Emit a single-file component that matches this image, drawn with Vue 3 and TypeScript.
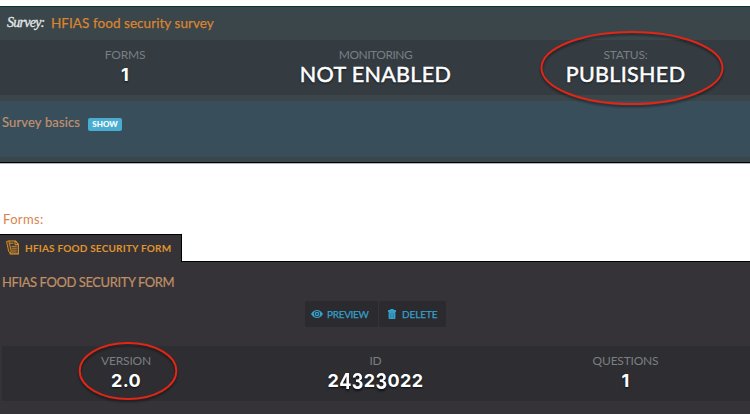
<script setup lang="ts">
interface Stat {
  label: string
  value: string
  kind: string
}

const surveyStats: Stat[] = [
  { label: 'FORMS', value: '1', kind: 'number' },
  { label: 'MONITORING', value: 'NOT ENABLED', kind: 'word' },
  { label: 'STATUS:', value: 'PUBLISHED', kind: 'word' },
]

const formStats: Stat[] = [
  { label: 'VERSION', value: '2.0', kind: 'number' },
  { label: 'ID', value: '24323022', kind: 'number' },
  { label: 'QUESTIONS', value: '1', kind: 'number' },
]

// Old-style figures: 3 and 4 hang below the baseline.
const hangs = (c: string): boolean => c === '3' || c === '4'
</script>

<template>
  <main class="page">
    <section class="survey">
      <header class="survey-head">
        <span class="script">Survey:</span>
        <h1 class="title">HFIAS food security survey</h1>
      </header>
      <div class="stats">
        <div v-for="s in surveyStats" :key="s.label" class="stat">
          <span class="label" :class="{ tight: s.label === 'MONITORING' }">{{ s.label }}</span>
          <span class="value" :class="s.kind">{{ s.value }}</span>
        </div>
        <svg class="ring ring-status" viewBox="0 0 184 76"><ellipse cx="92" cy="38" rx="90.5" ry="36" /></svg>
      </div>
      <div class="basics">
        <span class="basics-title">Survey basics</span>
        <button class="show">SHOW</button>
      </div>
    </section>

    <h2 class="forms-title">Forms:</h2>

    <div class="tab">
      <svg class="doc" viewBox="0 0 14 15">
        <path d="M2.8 1H9.5L12.3 4.2V13.8H3.6" fill="none" stroke="currentColor" stroke-width="1.2" />
        <path d="M9 1V4.6H12.3" fill="none" stroke="currentColor" />
        <path d="M5.4 6.3H10.8M5.6 8.2H10.8M5.8 10.1H10.8M5.5 12H10.8" stroke="currentColor" stroke-width=".9" />
        <path d="M.6 1.6L2.8.8L5.2 10.8L4.5 13.4L2.7 11.6Z" fill="#5b3d19" stroke="currentColor" stroke-width=".9" />
        <path d="M4 3.2H7.5" stroke="currentColor" />
      </svg>
      <span class="tab-text">HFIAS FOOD SECURITY FORM</span>
    </div>
    <section class="form">
      <h3 class="form-title">HFIAS FOOD SECURITY FORM</h3>
      <div class="actions">
        <button class="action preview">
          <svg class="eye" viewBox="0 0 12 8">
            <path fill="currentColor" fill-rule="evenodd" d="M0 4C1.6 1.4 3.6 0 6 0S10.4 1.4 12 4C10.4 6.6 8.4 8 6 8S1.6 6.6 0 4ZM6 1A3 3 0 1 0 6 7A3 3 0 1 0 6 1ZM6 1.7A2.3 2.3 0 1 1 6 6.3A2.3 2.3 0 1 1 6 1.7ZM6 3.1A.9.9 0 1 0 6 4.9A.9.9 0 1 0 6 3.1Z" />
          </svg>
          <span class="preview-text">PREVIEW</span>
        </button>
        <button class="action delete">
          <svg class="trash" viewBox="0 0 8 10">
            <path fill="currentColor" d="M2.3 1V0H5.7V1H8V3H0V1ZM.6 3H7.4V9.2Q7.4 10 6.6 10H1.4Q.6 10 .6 9.2Z" />
            <path stroke="#2a7193" stroke-width=".5" d="M2.5 4V9M4 4V9M5.5 4V9" />
          </svg>
          <span class="delete-text">DELETE</span>
        </button>
      </div>
      <div class="stats form-stats">
        <div v-for="s in formStats" :key="s.label" class="stat">
          <span class="label">{{ s.label }}</span>
          <span class="value" :class="s.kind"><span v-for="(c, i) in s.value" :key="i" :class="{ hang: hangs(c) }">{{ c }}</span></span>
        </div>
        <svg class="ring ring-version" viewBox="0 0 100 60"><ellipse cx="50" cy="30" rx="48.3" ry="28" /></svg>
      </div>
    </section>
  </main>
</template>

<style>
body {
  margin: 0;
  background: #fff;
}
</style>

<style scoped>
.page {
  box-sizing: border-box;
  width: 750px;
  height: 414px;
  padding-top: 6px;
  overflow: hidden;
  font-family: Lato, "Open Sans", sans-serif;
  background: #fff;
}
h1, h2, h3 {
  margin: 0;
  font-weight: 400;
}
button {
  border: 0;
  font-family: inherit;
}
span {
  white-space: nowrap;
}
.survey {
  box-sizing: border-box;
  height: 157px;
  border-top: 1px solid #08343a;
  border-bottom: 1px solid #000;
  background: #3b464b;
  box-shadow: 0 1px 0 #b5b5b5;
}
.survey-head {
  display: flex;
  height: 33px;
  padding-left: 7px;
}
.script {
  width: 44px;
  padding-top: 7px;
  box-sizing: border-box;
  color: #e4e9ea;
  font: italic 400 14px/18px "Liberation Serif", serif;
  letter-spacing: -0.75px;
  -webkit-text-stroke: 0.3px #e4e9ea;
}
.title {
  padding-top: 7px;
  color: #d9842f;
  font-size: 13.5px;
  line-height: 18px;
  letter-spacing: 0.05px;
  -webkit-text-stroke: 0.25px #d9842f;
}
.stats {
  position: relative;
  display: grid;
  grid-template-columns: 250px 251px 249px;
  height: 55px;
  background: #343b41;
}
.stat {
  display: flex;
  flex-direction: column;
  align-items: center;
  padding-top: 7px;
}
.label {
  color: #7b7f82;
  font-size: 12px;
  line-height: 15px;
  letter-spacing: -0.2px;
}
.tight {
  letter-spacing: -0.5px;
}
.value {
  color: #fff;
  text-shadow: 0 1px 2px #0a1015;
}
.word {
  font-size: 21.5px;
  line-height: 24px;
  letter-spacing: 0.35px;
  -webkit-text-stroke: 0.5px #fff;
}
.number {
  padding-top: 1px;
  font: 700 18px/24px Inter, sans-serif;
  letter-spacing: 0.35px;
}
.hang {
  display: inline-block;
  transform: scaleY(1.2);
  transform-origin: 50% 5.5px;
}
.ring {
  position: absolute;
  fill: none;
  stroke: #e12617;
  stroke-width: 2;
  filter: drop-shadow(0 2px 1px rgba(0, 0, 0, .45));
}
.ring-status {
  left: 539.5px;
  top: -10px;
  width: 184px;
  height: 76px;
}
.basics {
  display: flex;
  align-items: flex-start;
  height: 56px;
  box-sizing: border-box;
  margin-top: 6px;
  padding: 12px 0 0 2px;
  background: #384e5a;
}
.basics-title {
  width: 86px;
  color: #c09272;
  font-size: 13px;
  line-height: 18px;
  letter-spacing: 0.15px;
  -webkit-text-stroke: 0.2px #c09272;
}
.show {
  width: 34px;
  height: 13px;
  margin-top: 4.5px;
  padding: 0;
  border-radius: 2px;
  color: #fff;
  background: #48add0;
  font-size: 8px;
  line-height: 13px;
  font-weight: 900;
}
.forms-title {
  height: 24px;
  margin-top: 47px;
  padding-left: 3px;
  color: #d7844b;
  font-size: 13px;
  line-height: 18px;
  letter-spacing: 0.35px;
}
.tab {
  position: relative;
  z-index: 1;
  box-sizing: border-box;
  display: flex;
  align-items: center;
  width: 181.5px;
  height: 28px;
  padding: 0 0 2px 6px;
  border-top: 1px solid #000;
  border-right: 1px solid #000;
  color: #e0962b;
  background: #353338;
}
.doc {
  width: 14px;
  height: 15px;
  margin-right: 5px;
}
.tab-text {
  font-size: 10px;
  font-weight: 700;
  letter-spacing: 0.2px;
}
.form {
  box-sizing: border-box;
  height: 160px;
  margin-top: -1px;
  padding-left: 2px;
  border-top: 1px solid #000;
  background: #353338;
}
.form-title {
  height: 39px;
  padding-top: 11px;
  box-sizing: border-box;
  color: #c09066;
  font-size: 13px;
  line-height: 18px;
  letter-spacing: -0.42px;
  -webkit-text-stroke: 0.2px #c09066;
}
.actions {
  display: flex;
  gap: 1px;
  padding-left: 303px;
}
.action {
  display: flex;
  align-items: center;
  height: 26px;
  padding: 0 0 0 6px;
  border-radius: 2px;
  color: #349fc9;
  background: #2b2a2e;
  font-size: 10px;
  letter-spacing: -0.3px;
  -webkit-text-stroke: 0.25px #349fc9;
}
.preview { width: 73px; }
.delete { width: 67px; padding-left: 9px; letter-spacing: -0.1px; }
.eye {
  width: 12px;
  height: 8px;
  margin-right: 4px;
}
.trash {
  width: 8px;
  height: 10px;
  margin-right: 6px;
}
.form-stats {
  margin-top: 19px;
  grid-template-columns: 248px 251px 249px;
  background: #2e2d31;
}
.ring-version {
  left: 76px;
  top: -5px;
  width: 100px;
  height: 60px;
}
</style>
